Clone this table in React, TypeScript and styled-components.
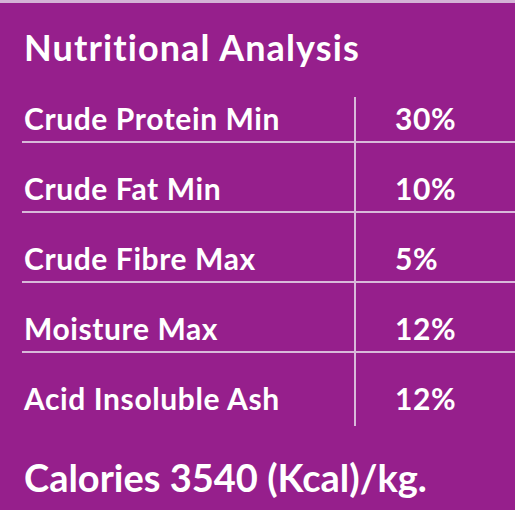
import React from 'react';
import styled, { createGlobalStyle } from 'styled-components';

const GlobalStyle = createGlobalStyle`
  html, body {
    margin: 0;
    padding: 0;
    background: #961f8c;
  }
  body {
    font-family: Lato, 'Noto Sans', sans-serif;
    font-variant-ligatures: none;
    color: #ffffff;
  }
`;

const Panel = styled.div`
  width: 515px;
  height: 510px;
  box-sizing: border-box;
  background: #961f8c;
  border-top: 3px solid #d4b2d6;
  overflow: hidden;
`;

const Title = styled.h1`
  margin: 0;
  padding: 22px 0 0 24px;
  font-size: 36px;
  line-height: 44px;
  font-weight: 700;
  letter-spacing: 1.1px;
`;

const Table = styled.div`
  margin: 4px 0 0 22px;
`;

const Row = styled.div<{ $last?: boolean }>`
  display: grid;
  grid-template-columns: 332px 1fr;
  height: 70px;
  box-sizing: border-box;
  border-bottom: ${(p) => (p.$last ? 'none' : '2px solid #d8b9da')};
`;

const Label = styled.div`
  padding: 30px 0 0 2px;
  font-size: 30px;
  line-height: 30px;
  font-weight: 700;
  letter-spacing: 0.6px;
`;

const Value = styled.div<{ $first?: boolean; $last?: boolean }>`
  position: relative;
  padding: 30px 0 0 41px;
  font-size: 30px;
  line-height: 30px;
  font-weight: 700;
  letter-spacing: 0.6px;
  &::before {
    content: '';
    position: absolute;
    left: 0;
    top: ${(p) => (p.$first ? '24px' : '0')};
    bottom: ${(p) => (p.$first ? '-2px' : p.$last ? '-3px' : '0')};
    width: 2px;
    background: #d8b9da;
  }
`;

const Calories = styled.div`
  padding: 32px 0 0 24px;
  font-size: 38px;
  line-height: 44px;
  font-weight: 700;
`;

const rows = [
  { name: 'Crude Protein Min', value: '30%' },
  { name: 'Crude Fat Min', value: '10%' },
  { name: 'Crude Fibre Max', value: '5%' },
  { name: 'Moisture Max', value: '12%' },
  { name: 'Acid Insoluble Ash', value: '12%' },
];

function App() {
  return (
    <>
      <GlobalStyle />
      <Panel>
        <Title>Nutritional Analysis</Title>
        <Table>
          {rows.map((row, index) => (
            <Row key={row.name} $last={index === rows.length - 1}>
              <Label>{row.name}</Label>
              <Value $first={index === 0} $last={index === rows.length - 1}>
                {row.value}
              </Value>
            </Row>
          ))}
        </Table>
        <Calories>Calories 3540 (Kcal)/kg.</Calories>
      </Panel>
    </>
  );
}

export default App;
